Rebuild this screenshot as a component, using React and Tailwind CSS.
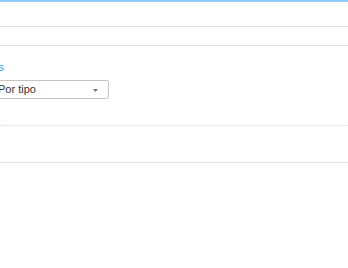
import React from 'react';

function App() {
  return (
    <div className="w-[348px] h-[268px] bg-white overflow-hidden font-['Liberation_Sans',Arial,sans-serif]">
      {/* focus underline of the search field above */}
      <div className="h-[2px] bg-[#90caf9]" />
      <div className="h-[24px]" />
      <div className="h-px bg-[#e0e0e0]" />
      <div className="h-[18px]" />
      <div className="h-px bg-[#e0e0e0]" />

      {/* grouping option */}
      <div className="flex flex-col -ml-[100px] pt-[15px]">
        <div className="flex justify-end w-[104px] text-[11px] leading-[13px] text-[#42a5f5] whitespace-nowrap">
          Agrupaciones
        </div>
        <div className="mt-[6px] flex items-center w-[209px] h-[19px] border border-[#c4c4c4] rounded-[2px] pl-[97px] pr-[10px] text-[11px] text-[#333]">
          <span className="flex-1">Por tipo</span>
          <svg width="5" height="3" viewBox="0 0 5 3" className="mt-px">
            <path d="M0 0h5L2.5 3z" fill="#757575" />
          </svg>
        </div>
      </div>

      <div className="h-[26px]" />
      <div className="h-px border-t border-dotted border-[#d6e0ea]" />
      <div className="h-[36px]" />
      <div className="h-px bg-[#e5e5e5]" />
    </div>
  );
}

export default App;
